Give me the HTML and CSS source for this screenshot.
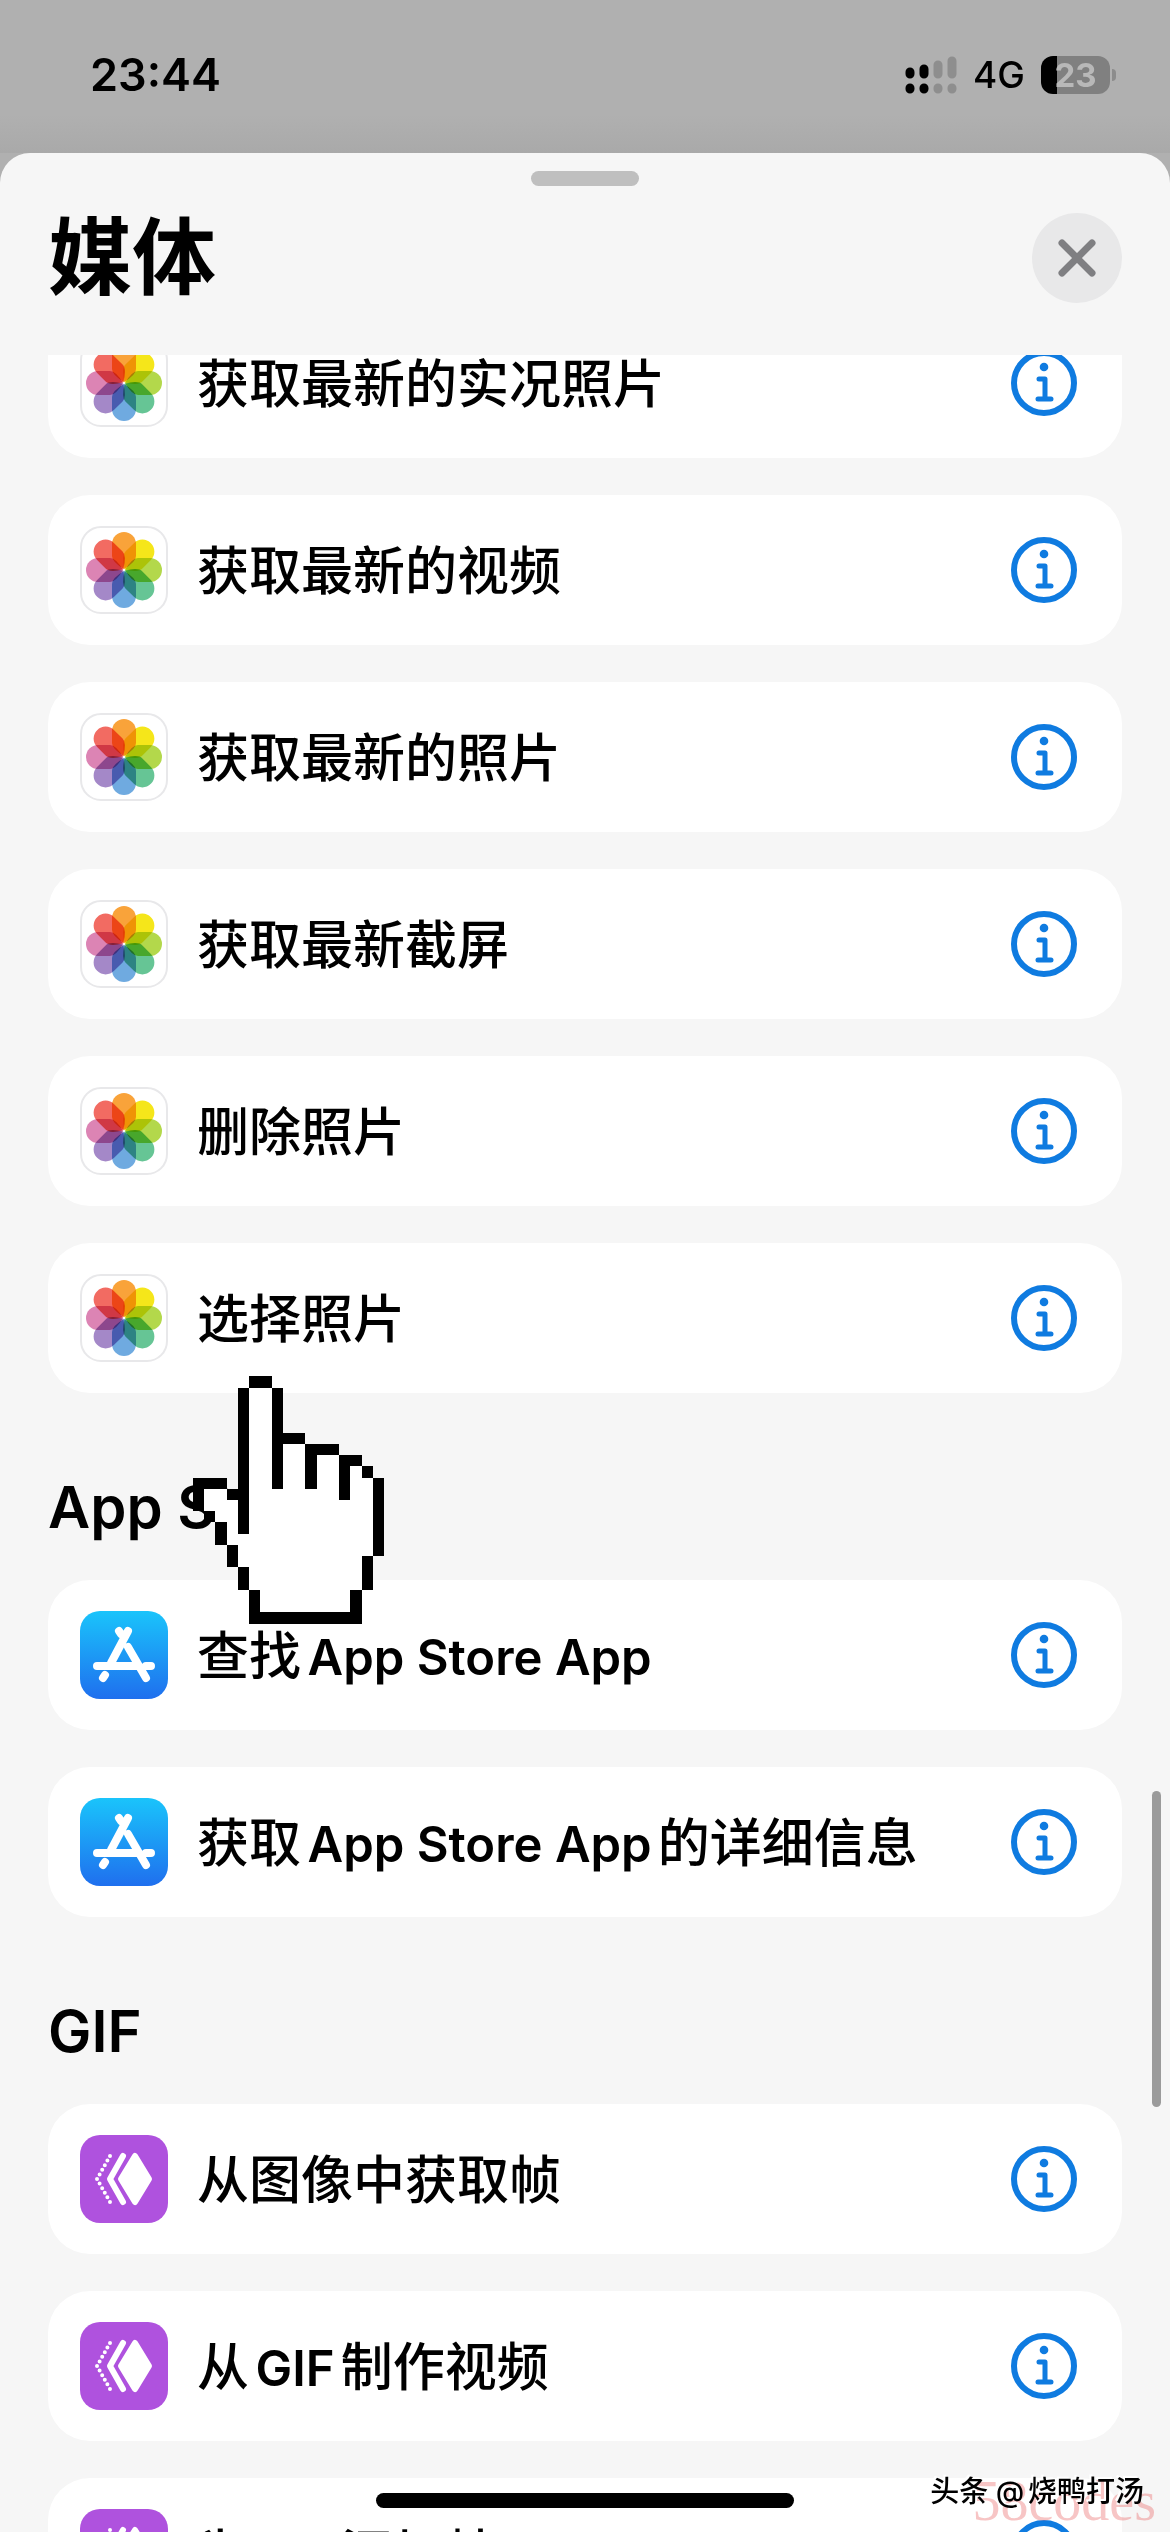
FILE: index.html
```
<!DOCTYPE html>
<html lang="zh-CN">
<head>
    <meta charset="UTF-8">
    <meta name="viewport" content="width=device-width, initial-scale=1.0">
    <title>媒体</title>
    <link rel="stylesheet" href="styles.css">
</head>
<body>

    <!-- アイコン定義 -->
    <svg class="defs" width="0" height="0" aria-hidden="true">
        <linearGradient id="store-bg" x1="0" y1="0" x2="0" y2="1">
            <stop offset="0" stop-color="#1ac4fb"/>
            <stop offset="1" stop-color="#1f6fee"/>
        </linearGradient>
        <path id="petal" d="M32 18a12 12 0 0 1 24 0v12q0 6 -12 13q-12 -7 -12 -13z"/>
        <symbol id="photos" viewBox="0 0 88 88">
            <rect x="1" y="1" width="86" height="86" rx="20" fill="#fff" stroke="#e8e8ea" stroke-width="2"/>
            <g class="petals">
                <use href="#petal" fill="#f9a33a"/>
                <use href="#petal" fill="#f5e61a" transform="rotate(45 44 44)"/>
                <use href="#petal" fill="#b3d84b" transform="rotate(90 44 44)"/>
                <use href="#petal" fill="#66c595" transform="rotate(135 44 44)"/>
                <use href="#petal" fill="#6faae0" transform="rotate(180 44 44)"/>
                <use href="#petal" fill="#a488c8" transform="rotate(225 44 44)"/>
                <use href="#petal" fill="#dc84b4" transform="rotate(270 44 44)"/>
                <use href="#petal" fill="#f26b62" transform="rotate(315 44 44)"/>
            </g>
        </symbol>
        <symbol id="store" viewBox="0 0 88 88">
            <rect width="88" height="88" rx="20" fill="url(#store-bg)"/>
            <g fill="none" stroke="#fff" stroke-width="8" stroke-linecap="round">
                <path d="M48 20L31 52M39 20L41 23M48 36L66 67M17 55H58M66 55H71M25 64L23 67"/>
            </g>
        </symbol>
        <symbol id="gif" viewBox="0 0 88 88">
            <rect width="88" height="88" rx="20" fill="#af52de"/>
            <path d="M55 21L69 44L55 67L41 44Z" fill="#fff" stroke="#fff" stroke-width="6" stroke-linejoin="round"/>
            <path d="M43 21L30 44L43 67" fill="none" stroke="#fff" stroke-width="6" stroke-linecap="round" stroke-linejoin="round"/>
            <path d="M30 21L17 44L30 67" fill="none" stroke="#fff" stroke-width="4" stroke-linecap="round" stroke-dasharray="0 5.28"/>
        </symbol>
        <symbol id="info" viewBox="0 0 66 66">
            <circle cx="33" cy="33" r="30" fill="none" stroke="#0f7be0" stroke-width="6"/>
            <circle cx="33" cy="17" r="4.3" fill="#0f7be0"/>
            <path d="M28 29H34V48M27 49H40" fill="none" stroke="#0f7be0" stroke-width="5" stroke-linecap="round" stroke-linejoin="round"/>
        </symbol>
    </svg>

    <header class="status">
        <span class="time">23:44</span>
        <div class="status-right">
            <svg width="52" height="38" viewBox="0 0 52 38">
                <g stroke-width="9" stroke-linecap="round">
                    <path stroke="#000" d="M5 32V33M19 32V33M5 16V18M19 13V18"/>
                    <path stroke="#8e8e8e" d="M33 32V33M47 32V33M33 9V18M47 5V18"/>
                </g>
            </svg>
            <span class="network">4G</span>
            <div class="battery"><span>23</span></div>
        </div>
    </header>

    <main class="sheet">
        <div class="handle"></div>
        <div class="sheet-header">
            <h1>媒体</h1>
            <button class="close" aria-label="关闭">
                <svg width="38" height="38" viewBox="0 0 38 38"><path d="M4 4L34 34M34 4L4 34" stroke="#7f7f82" stroke-width="7" stroke-linecap="round"/></svg>
            </button>
        </div>

        <div class="scroll">
            <ul class="list first">
                <li class="card"><svg class="icon"><use href="#photos"/></svg><span class="name">获取最新的实况照片</span><button class="info" aria-label="信息"><svg><use href="#info"/></svg></button></li>
                <li class="card"><svg class="icon"><use href="#photos"/></svg><span class="name">获取最新的视频</span><button class="info" aria-label="信息"><svg><use href="#info"/></svg></button></li>
                <li class="card"><svg class="icon"><use href="#photos"/></svg><span class="name">获取最新的照片</span><button class="info" aria-label="信息"><svg><use href="#info"/></svg></button></li>
                <li class="card"><svg class="icon"><use href="#photos"/></svg><span class="name">获取最新截屏</span><button class="info" aria-label="信息"><svg><use href="#info"/></svg></button></li>
                <li class="card"><svg class="icon"><use href="#photos"/></svg><span class="name">删除照片</span><button class="info" aria-label="信息"><svg><use href="#info"/></svg></button></li>
                <li class="card"><svg class="icon"><use href="#photos"/></svg><span class="name">选择照片</span><button class="info" aria-label="信息"><svg><use href="#info"/></svg></button></li>
            </ul>

            <h2>App Store
                <!-- 指カーソル -->
                <svg class="pointer" viewBox="0 0 17 22" shape-rendering="crispEdges">
                    <path fill="#fff" d="M5 1H7V5H10V6H13V7H15V9H16V16H15V19H14V21H6V19H5V17H4V15H3V13H2V12H1V10H3V11H4V1Z"/>
                    <path fill="#000" d="M5 0H7V1H5ZM4 1H5V14H4V11H3V10H4ZM7 1H8V5H10V6H8V10H7ZM10 6H13V7H11V10H10ZM13 7H15V8H14V11H13ZM15 8H16V9H15ZM16 9H17V16H16ZM15 16H16V19H15ZM14 19H15V22H5V19H6V21H14ZM4 17H5V19H4ZM3 15H4V17H3ZM2 13H3V15H2ZM1 12H2V13H1ZM0 9H3V10H1V12H0Z"/>
                </svg>
            </h2>
            <ul class="list">
                <li class="card"><svg class="icon"><use href="#store"/></svg><span class="name">查找<span class="en">App Store App</span></span><button class="info" aria-label="信息"><svg><use href="#info"/></svg></button></li>
                <li class="card"><svg class="icon"><use href="#store"/></svg><span class="name">获取<span class="en">App Store App</span>的详细信息</span><button class="info" aria-label="信息"><svg><use href="#info"/></svg></button></li>
            </ul>

            <h2>GIF</h2>
            <ul class="list">
                <li class="card"><svg class="icon"><use href="#gif"/></svg><span class="name">从图像中获取帧</span><button class="info" aria-label="信息"><svg><use href="#info"/></svg></button></li>
                <li class="card"><svg class="icon"><use href="#gif"/></svg><span class="name">从<span class="en">GIF</span>制作视频</span><button class="info" aria-label="信息"><svg><use href="#info"/></svg></button></li>
                <li class="card"><svg class="icon"><use href="#gif"/></svg><span class="name">为<span class="en">GIF</span>添加帧</span><button class="info" aria-label="信息"><svg><use href="#info"/></svg></button></li>
            </ul>
        </div>
    </main>

    <div class="scrollbar"></div>
    <div class="home-bar"></div>
    <div class="site-mark">58codes</div>
    <div class="author-mark">头条 @烧鸭打汤</div>

</body>
</html>
```
FILE: styles.css
```
* {
    box-sizing: border-box;
}

body {
    margin: 0;
    height: 100vh;
    display: flex;
    flex-direction: column;
    overflow: hidden;
    position: relative;
    background-color: #b0b0b0;
    color: #000;
    font-family: Inter, "Noto Sans CJK SC", sans-serif;
    text-autospace: normal;
}

.defs {
    position: absolute;
}

/* ステータスバー */
.status {
    flex: none;
    height: 153px;
    padding: 0 60px 4px 90px;
    display: flex;
    justify-content: space-between;
    align-items: center;
    background: linear-gradient(#b0b0b0 75%, #a9a9a9);
}

.time {
    font-size: 45px;
    font-weight: 600;
}

.status-right {
    display: flex;
    align-items: center;
    gap: 16px;
}

.network {
    font-size: 37px;
    font-weight: 500;
}

.battery {
    position: relative;
    width: 69px;
    height: 38px;
    border-radius: 12px;
    background: linear-gradient(to right, #000 16px, #808080 16px);
    color: #b8b8b8;
    font-size: 33px;
    font-weight: 700;
    line-height: 38px;
    text-align: center;
}

.battery::after {
    content: "";
    position: absolute;
    right: -6px;
    top: 13px;
    width: 4px;
    height: 12px;
    border-radius: 0 4px 4px 0;
    background-color: #8c8c8c;
}

/* シート */
.sheet {
    flex: 1;
    min-height: 0;
    display: flex;
    flex-direction: column;
    background-color: #f6f6f6;
    border-radius: 30px 30px 0 0;
}

.handle {
    flex: none;
    width: 108px;
    height: 15px;
    margin: 18px auto 0;
    border-radius: 8px;
    background-color: #bfbfbf;
}

.sheet-header {
    flex: none;
    height: 169px;
    padding: 0 48px 26px;
    display: flex;
    justify-content: space-between;
    align-items: center;
}

h1 {
    margin: 0;
    font-size: 84px;
    line-height: 100px;
    font-weight: 700;
}

.close {
    width: 90px;
    height: 90px;
    padding: 0;
    display: flex;
    justify-content: center;
    align-items: center;
    border: none;
    border-radius: 50%;
    background-color: #e8e8e9;
}

.scroll {
    flex: 1;
    min-height: 0;
    overflow: hidden;
    padding: 0 48px;
}

.list {
    list-style: none;
    margin: 0;
    padding: 0;
    display: flex;
    flex-direction: column;
    gap: 37px;
}

.list.first {
    margin-top: -47px;
}

.card {
    height: 150px;
    padding: 0 45px 0 32px;
    display: flex;
    align-items: center;
    gap: 29px;
    border-radius: 42px;
    background-color: #fff;
    font-size: 52px;
    font-weight: 500;
    white-space: nowrap;
}

.name {
    padding-bottom: 6px;
}

.en {
    font-size: 49px;
    font-weight: 600;
}

.icon {
    flex: none;
    width: 88px;
    height: 88px;
}

.petals use {
    mix-blend-mode: multiply;
}

.info {
    width: 66px;
    height: 66px;
    margin-left: auto;
    padding: 0;
    border: none;
    background: none;
}

.info svg {
    display: block;
    width: 66px;
    height: 66px;
}

h2 {
    position: relative;
    margin: 0;
    height: 187px;
    padding-top: 77px;
    font-size: 58px;
    line-height: 74px;
    font-weight: 600;
}

.pointer {
    position: absolute;
    left: 145px;
    top: -17px;
    width: 191px;
    height: 248px;
}

/* 画面に重なる要素 */
.scrollbar {
    position: absolute;
    right: 9px;
    top: 1791px;
    width: 9px;
    height: 316px;
    border-radius: 5px;
    background-color: #9b9b9b;
}

.home-bar {
    position: absolute;
    left: 50%;
    bottom: 24px;
    width: 418px;
    height: 15px;
    margin-left: -209px;
    border-radius: 8px;
    background-color: #000;
}

.site-mark {
    position: absolute;
    right: 14px;
    bottom: 1px;
    font-family: "Liberation Serif", serif;
    font-size: 56px;
    line-height: 60px;
    color: rgba(235, 110, 110, 0.4);
}

.author-mark {
    position: absolute;
    right: 26px;
    bottom: 20px;
    font-size: 29px;
    font-weight: 500;
    line-height: 40px;
    text-shadow: -2px -2px 0 #fff;
}
```
